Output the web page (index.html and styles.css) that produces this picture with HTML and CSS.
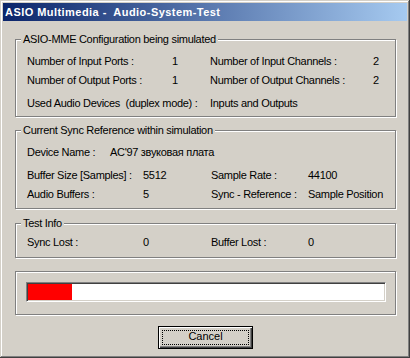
FILE: index.html
```html
<!DOCTYPE html>
<html lang="en">
<head>
  <meta charset="UTF-8" />
  <title>ASIO Multimedia - Audio-System-Test</title>
  <link rel="stylesheet" href="styles.css">
</head>
<body>
  <div class="window">
    <div class="titlebar">ASIO Multimedia -  Audio-System-Test</div>

    <div class="client">
      <!-- Configuration -->
      <div class="group group-config">
        <div class="legend">ASIO-MME Configuration being simulated</div>
        <div class="row cols-config first">
          <span>Number of Input Ports :</span><span>1</span>
          <span>Number of Input Channels :</span><span>2</span>
        </div>
        <div class="row cols-config tight">
          <span>Number of Output Ports :</span><span>1</span>
          <span>Number of Output Channels :</span><span>2</span>
        </div>
        <div class="row cols-devices wide">
          <span>Used Audio Devices  (duplex mode) :</span><span>Inputs and Outputs</span>
        </div>
      </div>

      <!-- Sync reference -->
      <div class="group group-sync">
        <div class="legend">Current Sync Reference within simulation</div>
        <div class="row cols-name first">
          <span>Device Name :</span><span>AC'97 звуковая плата</span>
        </div>
        <div class="row cols-sync wide">
          <span>Buffer Size [Samples] :</span><span>5512</span>
          <span>Sample Rate :</span><span>44100</span>
        </div>
        <div class="row cols-sync tight">
          <span>Audio Buffers :</span><span>5</span>
          <span>Sync - Reference :</span><span>Sample Position</span>
        </div>
      </div>

      <!-- Test info -->
      <div class="group group-test">
        <div class="legend">Test Info</div>
        <div class="row cols-sync tight">
          <span>Sync Lost :</span><span>0</span>
          <span>Buffer Lost :</span><span>0</span>
        </div>
      </div>

      <!-- Progress -->
      <div class="group group-progress">
        <div class="progress">
          <div class="progress-fill" style="width: 44px;"></div>
        </div>
      </div>

      <div class="buttons">
        <button class="btn btn-default"><span class="focus">Cancel</span></button>
      </div>
    </div>
  </div>
</body>
</html>
```

FILE: styles.css
```css
body {
  margin: 0;
  font-family: "Liberation Sans", Arial, sans-serif;
  font-size: 11px;
  line-height: 13px;
  letter-spacing: -0.3px;
  color: #000;
  background-color: #d4d0c8;
}

.window {
  width: 410px;
  height: 358px;
  box-sizing: border-box;
  padding: 3px;
  background-color: #d4d0c8;
  box-shadow:
    inset -1px -1px #404040,
    inset 1px 1px #d4d0c8,
    inset -2px -2px #808080,
    inset 2px 2px #fff;
}

.titlebar {
  height: 18px;
  line-height: 18px;
  padding-left: 2px;
  color: #fff;
  font-weight: bold;
  letter-spacing: 0.45px;
  white-space: pre;
  background: linear-gradient(to right, #0a246a, #a6caf0);
}

.client {
  padding: 18px 11px 0 12px;
}

/* etched group box */
.group {
  box-sizing: border-box;
  border: 1px solid #808080;
  box-shadow: inset 1px 1px #fff, 1px 1px #fff;
}

.group-config {
  height: 78px;
}

.group-sync {
  height: 79px;
  margin-top: 13px;
}

.group-test {
  height: 35px;
  margin-top: 14px;
}

.group-progress {
  height: 44px;
  margin-top: 13px;
  padding: 10px 0 0 10px;
}

.legend {
  width: fit-content;
  margin: -7px 0 0 5px;
  padding: 0 2px;
  white-space: pre;
  background-color: #d4d0c8;
}

.row {
  display: grid;
  padding-left: 11px;
  white-space: pre;
}

.row.first {
  margin-top: 9px;
}

.row.tight {
  margin-top: 6px;
}

.row.wide {
  margin-top: 10px;
}

.cols-config {
  grid-template-columns: 145px 38px 163px auto;
}

.cols-devices {
  grid-template-columns: 183px auto;
}

.cols-name {
  grid-template-columns: 83px auto;
}

.cols-sync {
  grid-template-columns: 116px 68px 97px auto;
}

.progress {
  width: 360px;
  height: 20px;
  box-sizing: border-box;
  padding: 1px;
  border: 1px solid;
  border-color: #808080 #fff #fff #808080;
  background-color: #fff;
  box-shadow: inset 1px 1px #404040, inset -1px -1px #d4d0c8;
}

.progress-fill {
  height: 16px;
  background-color: #f00;
}

.buttons {
  display: flex;
  justify-content: center;
  margin-top: 11px;
}

.btn {
  width: 95px;
  height: 23px;
  box-sizing: border-box;
  padding: 3px;
  border: 1px solid #000;
  background-color: #d4d0c8;
  font: inherit;
  color: #000;
  box-shadow:
    inset 1px 1px #fff,
    inset -1px -1px #404040,
    inset -2px -2px #808080;
}

.focus {
  display: block;
  height: 13px;
  line-height: 11px;
  border: 1px dotted #000;
  text-align: center;
}
```
